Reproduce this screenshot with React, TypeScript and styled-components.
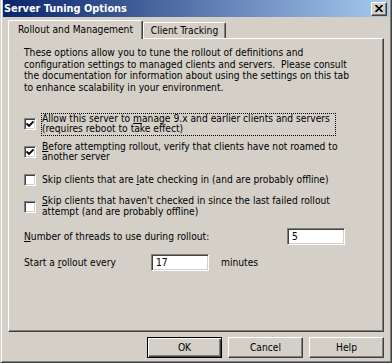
import React from "react";
import styled, { createGlobalStyle } from "styled-components";

const GlobalStyle = createGlobalStyle`
  html, body { margin: 0; padding: 0; background: #d4d0c8; }
  body {
    font-family: "DejaVu Sans Condensed", "DejaVu Sans", sans-serif;
    font-size: 10.2px;
    color: #000;
  }
`;

const Window = styled.div`
  box-sizing: border-box;
  width: 392px;
  height: 363px;
  display: flex;
  flex-direction: column;
  background: #d4d0c8;
  border-left: 1px solid #d4d0c8;
  border-right: 1px solid #404040;
  border-bottom: 1px solid #404040;
  box-shadow: inset 1px 0 #ffffff, inset -1px -1px #808080;
  padding: 0 2px 2px 2px;
`;

const TitleBar = styled.div`
  height: 17px;
  flex: none;
  display: flex;
  align-items: center;
  justify-content: space-between;
  padding: 0 2px 0 1px;
  background: linear-gradient(to right, #0a246a, #a6caf0);
`;

const Title = styled.span`
  color: #fff;
  font-weight: bold;
  font-size: 10.9px;
  white-space: nowrap;
`;

const CloseButton = styled.div`
  box-sizing: border-box;
  width: 16px;
  height: 14px;
  display: flex;
  align-items: center;
  justify-content: center;
  background: #d4d0c8;
  border-top: 1px solid #fff;
  border-left: 1px solid #fff;
  border-right: 1px solid #404040;
  border-bottom: 1px solid #404040;
  box-shadow: inset -1px -1px #808080;
`;

const Body = styled.div`
  flex: 1;
  display: flex;
  flex-direction: column;
  padding: 3px 5px 0 5px;
`;

const TabStrip = styled.div`
  height: 18px;
  flex: none;
  display: flex;
  align-items: flex-end;
`;

const Tab = styled.div<{ $active?: boolean; $width: number }>`
  box-sizing: border-box;
  position: relative;
  z-index: 1;
  width: ${(p) => p.$width}px;
  height: ${(p) => (p.$active ? 19 : 16)}px;
  margin-bottom: ${(p) => (p.$active ? -1 : 0)}px;
  display: flex;
  align-items: center;
  justify-content: center;
  padding-bottom: ${(p) => (p.$active ? 2 : 0)}px;
  background: #d4d0c8;
  border-top: 1px solid #fff;
  border-left: 1px solid #fff;
  border-right: 1px solid #404040;
  border-top-left-radius: 2px;
  border-top-right-radius: 2px;
  box-shadow: inset -1px 0 #808080;
  white-space: nowrap;
`;

const Panel = styled.div`
  box-sizing: border-box;
  height: 294px;
  flex: none;
  display: flex;
  flex-direction: column;
  border-top: 1px solid #fff;
  border-left: 1px solid #fff;
  border-right: 1px solid #404040;
  border-bottom: 1px solid #404040;
  box-shadow: inset -1px -1px #808080;
  padding: 8px 0 0 15px;
`;

const Intro = styled.p`
  margin: 0;
  line-height: 11.7px;
  white-space: nowrap;
`;

const CheckRow = styled.div<{ $gap: number }>`
  display: flex;
  align-items: center;
  gap: 5px;
  margin-top: ${(p) => p.$gap}px;
`;

const Box = styled.div`
  box-sizing: border-box;
  width: 12px;
  height: 12px;
  flex: none;
  background: #fff;
  border-top: 1px solid #808080;
  border-left: 1px solid #808080;
  border-right: 1px solid #fff;
  border-bottom: 1px solid #fff;
  box-shadow: inset 1px 1px #404040, inset -1px -1px #d4d0c8;
  display: flex;
  align-items: center;
  justify-content: center;
`;

const Label = styled.div<{ $focused?: boolean }>`
  line-height: 10.5px;
  white-space: nowrap;
  padding: 0 5px 0 0;
  border: 1px ${(p) => (p.$focused ? "dotted #000" : "solid transparent")};
`;

const Key = styled.span`
  text-decoration: underline;
  text-underline-offset: 1px;
`;

const FieldRow = styled.div<{ $gap: number }>`
  display: flex;
  align-items: center;
  margin-top: ${(p) => p.$gap}px;
`;

const FieldLabel = styled.span<{ $width: number }>`
  width: ${(p) => p.$width}px;
  flex: none;
  white-space: nowrap;
`;

const TextBox = styled.div`
  box-sizing: border-box;
  width: 58px;
  height: 17px;
  display: flex;
  align-items: center;
  padding-left: 4px;
  background: #fff;
  border-top: 1px solid #808080;
  border-left: 1px solid #808080;
  border-right: 1px solid #fff;
  border-bottom: 1px solid #fff;
  box-shadow: inset 1px 1px #404040, inset -1px -1px #d4d0c8;
`;

const Suffix = styled.span`
  margin-left: 12px;
`;

const ButtonRow = styled.div`
  display: flex;
  justify-content: flex-end;
  gap: 6px;
  margin-top: 5px;
`;

const Button = styled.div<{ $default?: boolean }>`
  box-sizing: border-box;
  width: 75px;
  height: 21px;
  display: flex;
  align-items: center;
  justify-content: center;
  background: #d4d0c8;
  border: 1px solid;
  border-color: ${(p) => (p.$default ? "#000" : "#fff #404040 #404040 #fff")};
  box-shadow: ${(p) =>
    p.$default
      ? "inset 1px 1px #fff, inset -1px -1px #404040, inset -2px -2px #808080"
      : "inset -1px -1px #808080"};
`;

const Check = () => (
  <svg width="8" height="8" viewBox="0 0 8 8">
    <path d="M0.5 3.5 L3 6 L7.5 1.5" fill="none" stroke="#000" strokeWidth="1.8" />
  </svg>
);

const CloseGlyph = () => (
  <svg width="8" height="7" viewBox="0 0 8 7">
    <path d="M0.5 0 L7.5 7 M7.5 0 L0.5 7" stroke="#000" strokeWidth="1.7" />
  </svg>
);

export default function App() {
  return (
    <>
      <GlobalStyle />
      <Window>
        <TitleBar>
          <Title>Server Tuning Options</Title>
          <CloseButton>
            <CloseGlyph />
          </CloseButton>
        </TitleBar>
        <Body>
          <TabStrip>
            <Tab $active $width={135}>Rollout and Management</Tab>
            <Tab $width={83}>Client Tracking</Tab>
          </TabStrip>
          <Panel>
            <Intro>
              These options allow you to tune the rollout of definitions and
              <br />
              configuration settings to managed clients and servers.&nbsp; Please consult
              <br />
              the documentation for information about using the settings on this tab
              <br />
              to enhance scalability in your environment.
            </Intro>
            <CheckRow $gap={19}>
              <Box>
                <Check />
              </Box>
              <Label $focused>
                Allow this server to <Key>m</Key>anage 9.x and earlier clients and servers
                <br />
                (requires reboot to take effect)
              </Label>
            </CheckRow>
            <CheckRow $gap={5}>
              <Box>
                <Check />
              </Box>
              <Label>
                <Key>B</Key>efore attempting rollout, verify that clients have not roamed to
                <br />
                another server
              </Label>
            </CheckRow>
            <CheckRow $gap={10}>
              <Box />
              <Label>
                Skip clients that are <Key>l</Key>ate checking in (and are probably offline)
              </Label>
            </CheckRow>
            <CheckRow $gap={9}>
              <Box />
              <Label>
                <Key>S</Key>kip clients that haven't checked in since the last failed rollout
                <br />
                attempt (and are probably offline)
              </Label>
            </CheckRow>
            <FieldRow $gap={10}>
              <FieldLabel $width={263}>
                <Key>N</Key>umber of threads to use during rollout:
              </FieldLabel>
              <TextBox>5</TextBox>
            </FieldRow>
            <FieldRow $gap={9}>
              <FieldLabel $width={127}>
                Start a <Key>r</Key>ollout every
              </FieldLabel>
              <TextBox>17</TextBox>
              <Suffix>minutes</Suffix>
            </FieldRow>
          </Panel>
          <ButtonRow>
            <Button $default>OK</Button>
            <Button>Cancel</Button>
            <Button>Help</Button>
          </ButtonRow>
        </Body>
      </Window>
    </>
  );
}
